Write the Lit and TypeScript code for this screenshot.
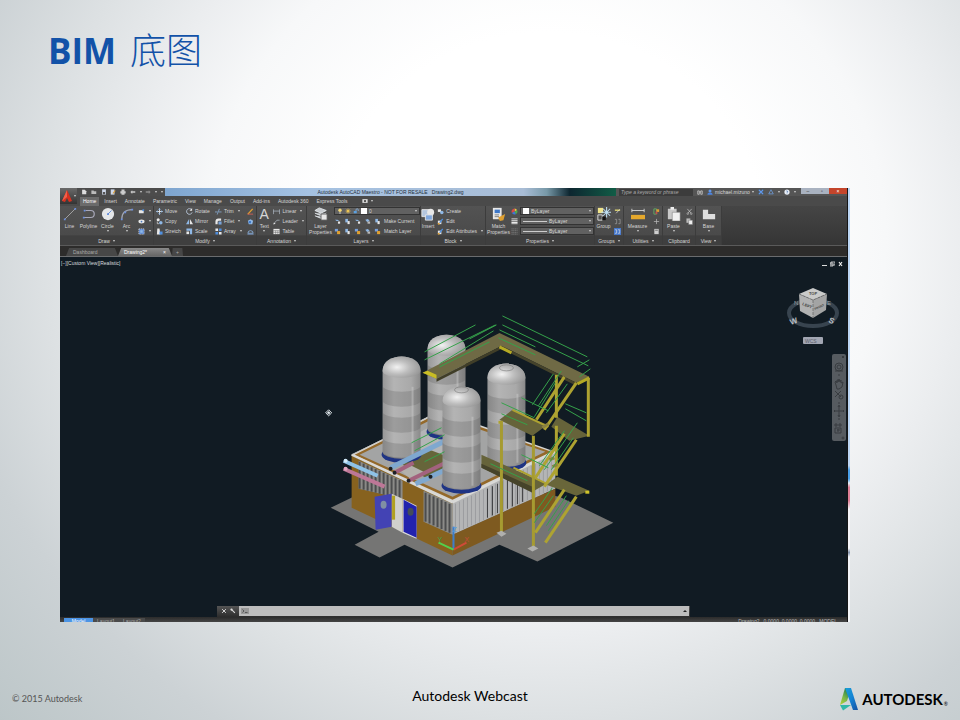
import { LitElement, html, svg, css, nothing, TemplateResult } from "lit";
import { customElement } from "lit/decorators.js";

const B = "#8fb8e6";
const W = "#e8e8e8";
const Y = "#e0a030";

/* Toolbar glyphs, each drawn in a 16 x 16 box */
const glyphs: Record<string, unknown> = {
  line: svg`<path d="M2 14L14 2" stroke="#aaa" stroke-width="1"/><path d="M1 13h2v2H1zM13 1h2v2h-2z" fill="#6b8fe0"/>`,
  polyline: svg`<path d="M4 4h6a4 4 0 0 1 0 8H2" fill="none" stroke="#a8a8b8" stroke-width="1.4"/><path d="M2 3h2v2H2zM1 11h2v2H1z" fill="#6b8fe0"/>`,
  circle: svg`<circle cx="8" cy="8" r="7" fill="#e4e6e8"/><path d="M8 8l4-4" stroke="#5a86d8"/><path d="M7 7h2v2H7z" fill="#5a86d8"/>`,
  arc: svg`<path d="M2 14C2 7 6 3 14 3" fill="none" stroke="#a0a6b4" stroke-width="1.3"/><path d="M1 13h2v2H1zM5 5h2v2H5zM13 2h2v2h-2z" fill="#6b8fe0"/>`,
  rect: svg`<path d="M2 5h11v7H2z" fill="${W}"/><path d="M10 3h4v4h-4z" fill="#4f8fe0"/>`,
  ellipse: svg`<ellipse cx="8" cy="8" rx="7" ry="4.5" fill="${W}"/><circle cx="8" cy="8" r="2" fill="#4a7ac0"/>`,
  hatch: svg`<path d="M2 2h12v12H2z" fill="#4f7fd0" stroke="${W}" stroke-width="1.5" stroke-dasharray="3 1.5"/><path d="M5 5h6v6H5z" fill="${B}"/>`,
  move: svg`<path d="M8 1v14M1 8h14" stroke="${W}" stroke-width="2"/><path d="M8 0l3 4H5zM8 16l3-4H5zM0 8l4-3v6zM16 8l-4-3v6z" fill="${B}"/>`,
  copy: svg`<circle cx="5" cy="4" r="3.5" fill="${W}"/><circle cx="11" cy="11" r="4" fill="${B}"/><path d="M3 8v5h4" fill="none" stroke="${W}" stroke-width="1.5"/>`,
  stretch: svg`<path d="M3 1h5l2 14H2z" fill="${W}"/><path d="M8 8h7v7H8z" fill="#4f8fe0"/>`,
  rotate: svg`<path d="M13 4a6.5 6.5 0 1 0 1 6" fill="none" stroke="#b9c8dc" stroke-width="2"/><path d="M14 0v6H8z" fill="${W}"/>`,
  mirror: svg`<path d="M7 2v12H0z" fill="${B}"/><path d="M9 2v12h7z" fill="${W}"/>`,
  scale: svg`<path d="M1 1h13v13H9V6H1z" fill="${B}"/><path d="M1 8h6v6H1z" fill="${W}"/>`,
  trim: svg`<path d="M0 9h6M9 9h6M10 2L5 15" stroke="${B}" stroke-width="1.6"/>`,
  fillet: svg`<path d="M1 14V8a7 7 0 0 1 7-7h6v5H9a3 3 0 0 0-3 3v5z" fill="${W}"/><path d="M8 8h7v7H8z" fill="#78a4dc"/>`,
  array: svg`<path d="M1 1h6v6H1zM9 9h6v6H9z" fill="${W}"/><path d="M9 1h6v6H9zM1 9h6v6H1z" fill="#4f8fe0"/>`,
  erase: svg`<path d="M2 14L13 2" stroke="${Y}" stroke-width="3"/><path d="M1 14h13" stroke="#d06058" stroke-width="2"/>`,
  explode: svg`<path d="M2 6l6-3 6 3-2 8H4z" fill="${B}"/><path d="M4 7h5v5H4z" fill="#3f78c8"/>`,
  offset: svg`<path d="M2 12a6 6 0 0 1 12 0z" fill="none" stroke="${B}" stroke-width="1.8"/><path d="M1 14h14" stroke="#7f9fd0" stroke-width="2"/>`,
  linear: svg`<path d="M1 3v11M15 3v11M1 7h14" stroke="#b9c3cf" stroke-width="1.5" fill="none"/>`,
  leader: svg`<path d="M2 13L9 5h6" stroke="#b9c3cf" stroke-width="1.5" fill="none"/><path d="M1 15l1-5 4 3z" fill="${W}"/>`,
  table: svg`<path d="M1 2h14v12H1z" fill="${W}"/><path d="M1 6h14M1 10h14M6 6v8M11 6v8" stroke="#555"/>`,
  layers: svg`<path d="M6 1l8 3-6 3-7-3zM1 7l7 3 6-3M1 10l7 3 4-2" fill="#c8ccd0" stroke="#e4e8ec"/><path d="M8 8h7v7H8z" fill="${W}" stroke="#555"/>`,
  layerA: svg`<path d="M2 4h6l4 3H6z" fill="${B}"/><path d="M9 8h5v5H9z" fill="${W}"/>`,
  layerB: svg`<path d="M3 2h6v8H3z" fill="${B}"/><path d="M8 7h5v7H8z" fill="${W}"/>`,
  layerC: svg`<path d="M2 2h7v6H2z" fill="#7aa0d8"/><path d="M7 7h7v7H7z" fill="${Y}"/>`,
  layerD: svg`<path d="M3 4l6-2 4 5-6 2z" fill="${B}"/><path d="M8 8h6v5H8z" fill="#b9b9b9"/>`,
  bulb: svg`<circle cx="8" cy="6" r="4.5" fill="#f2d774"/><path d="M6 11h4v4H6z" fill="#bbb"/>`,
  sun: svg`<circle cx="8" cy="8" r="4" fill="#f4cf5a"/><path d="M8 0v16M0 8h16M2 2l12 12M14 2L2 14" stroke="#e8bf50"/>`,
  lock: svg`<path d="M2 8h8v6H2z" fill="#5aa0e0"/><path d="M8 8V5a3 3 0 0 1 6 0v3" stroke="${B}" stroke-width="2" fill="none"/>`,
  insert: svg`<path d="M1 3h9v8H1z" fill="#b4c6de" stroke="${W}"/><circle cx="11" cy="6" r="4" fill="${W}"/><path d="M5 9h8v6H5z" fill="#7fa6dc" stroke="${W}"/>`,
  create: svg`<path d="M2 3h7v6H2z" fill="${W}"/><circle cx="11" cy="10" r="4" fill="${B}"/>`,
  edit: svg`<path d="M2 6h8v8H2z" fill="${W}"/><path d="M6 11l7-9" stroke="#4f8fe0" stroke-width="3"/><path d="M2 11h4v4H2z" fill="${Y}"/>`,
  match: svg`<path d="M1 1h10v13H1z" fill="${W}"/><path d="M3 3h6v4H3z" fill="#3f78c8"/><path d="M3 9h5M3 11h5" stroke="#777"/><path d="M7 12l8-4-2 7-4 1z" fill="${Y}"/>`,
  wheel: svg`<path d="M8 8V1a7 7 0 0 1 6 4z" fill="#e8c840"/><path d="M8 8l6-3a7 7 0 0 1-3 9z" fill="#50a850"/><path d="M8 8l3 6a7 7 0 0 1-9-3z" fill="#3f78d8"/><path d="M8 8l-6 3A7 7 0 0 1 8 1z" fill="#d84848"/>`,
  weights: svg`<path d="M1 2h14M1 6h14M1 13h14" stroke="${W}" stroke-width="2"/><path d="M1 10h14" stroke="${W}" stroke-width="3"/>`,
  linetypes: svg`<path d="M1 2h14M1 6h14M1 10h14M1 14h14" stroke="#888" stroke-width="1.5" stroke-dasharray="3 1"/>`,
  group: svg`<path d="M1 1h6v6H1z" fill="#efe38a"/><path d="M1 9h5v6H1z" fill="none" stroke="${W}"/><path d="M11 0v12M5 6h11M7 2l8 8M15 2L7 10" stroke="#bfe0f4" stroke-width="1.2"/><path d="M6 11h4v4H6z" fill="#111"/>`,
  ungroup: svg`<path d="M2 5h12" stroke="#e8dc70" stroke-width="3"/><path d="M5 12l8-9" stroke="${W}" stroke-width="1.5"/>`,
  groupEdit: svg`<path d="M2 3h4v10H2M10 3h4v10h-4" fill="none" stroke="#aaa" stroke-width="1.4"/>`,
  groupSel: svg`<path d="M0 0h16v16H0z" fill="#4678cc"/><path d="M2 4h4v8H2M9 4h4v8H9" fill="none" stroke="${W}" stroke-width="1.4"/>`,
  measure: svg`<path d="M1 4h14M1 2v4M15 2v4" stroke="#d8d8d8"/><path d="M0 9h16v5H0z" fill="#e5a82c"/>`,
  quick: svg`<path d="M2 2h6v12H2z" fill="none" stroke="#62b062" stroke-width="2"/><path d="M8 3h6v6H8z" fill="${Y}"/><path d="M6 8h4v6H6z" fill="#c05050"/>`,
  point: svg`<path d="M8 2v12M2 8h12" stroke="#bbb" stroke-width="1.6"/>`,
  calc: svg`<path d="M3 2h10v12H3z" fill="#cfcfcf"/><path d="M5 4h6v2H5z" fill="#666"/>`,
  paste: svg`<path d="M1 2h10v12H1z" fill="#c9c9c9"/><path d="M4 0h4v3H4z" fill="#eee"/><path d="M6 6h9v10H6z" fill="#f1f1f1" stroke="#777" stroke-width=".6"/>`,
  cut: svg`<path d="M3 2l9 10M13 2L4 12" stroke="#ddd" stroke-width="1.4"/><circle cx="4" cy="13" r="2" fill="none" stroke="#ddd"/><circle cx="12" cy="13" r="2" fill="none" stroke="#ddd"/>`,
  clip: svg`<path d="M1 1h9v10H1z" fill="#bbb"/><path d="M6 5h9v10H6z" fill="#eee" stroke="#666"/>`,
  base: svg`<path d="M1 3h6v5h8v6H1z" fill="#dedede"/>`,
  doc: svg`<path d="M3 2h7l4 4v8H3z" fill="#ddd"/>`,
  open: svg`<path d="M1 4h6l1 2h6v7H1z" fill="#bbb"/>`,
  save: svg`<path d="M3 1h10v14H3z" fill="#cfd8ea"/><path d="M5 8h6v6H5z" fill="#555"/>`,
  saveAs: svg`<path d="M2 1h10v14H2z" fill="#cfd8ea"/><path d="M8 12l6-8" stroke="${Y}" stroke-width="3"/>`,
  print: svg`<path d="M4 1h8v5H4zM1 6h14v6H1zM4 10h8v5H4z" fill="#ccc"/>`,
  undo: svg`<path d="M6 3L1 8l5 5v-3h8V6H6z" fill="#c9c9c9"/>`,
  redo: svg`<path d="M10 3l5 5-5 5v-3H2V6h8z" fill="#8b8b8b"/>`,
  find: svg`<path d="M2 5h4v9H2zM10 5h4v9h-4zM6 8h4" fill="none" stroke="#ccc" stroke-width="2"/>`,
  user: svg`<circle cx="8" cy="5" r="4" fill="#5f98ec"/><path d="M1 15c0-8 14-8 14 0z" fill="#4c84e0"/>`,
  exchange: svg`<path d="M2 2l12 12M14 2L2 14" stroke="#5f98ec" stroke-width="3"/><path d="M1 1h14v14H1z" fill="none" stroke="#456"/>`,
  cloud: svg`<path d="M8 2l6 11H2z" fill="none" stroke="#6f9fe0" stroke-width="2"/>`,
  help: svg`<circle cx="8" cy="8" r="7" fill="#e8eef6"/><path d="M6 6a2 2 0 1 1 2 3v1M8 12v1" stroke="#335f9f" stroke-width="1.6" fill="none"/>`,
  camera: svg`<path d="M1 3h14v10H1z" fill="#ddd"/><circle cx="8" cy="8" r="3" fill="#444"/>`,
  wrench: svg`<path d="M3 3l10 10" stroke="#ddd" stroke-width="3"/><circle cx="4" cy="4" r="3" fill="#ddd"/>`,
  prompt: svg`<path d="M0 2h16v12H0z" fill="#999"/><path d="M3 5l3 3-3 3M8 11h5" stroke="#444" fill="none" stroke-width="1.5"/>`,
};

const icon = (name: string, size = "s") =>
  html`<svg class="ico ${size}" viewBox="0 0 16 16" aria-hidden="true">${glyphs[name]}</svg>`;
const caret = html`<i class="caret"></i>`;

const big = (name: string, label: string, second: unknown = nothing) => html`
  <button class="big">
    <span class="bigicon">${name === "A" ? html`<span class="letter">A</span>` : icon(name, "l")}</span>
    <span>${label}</span>${second}
  </button>`;

const small = (name: string, label: string, drop = false) =>
  html`<button class="small">${icon(name)}${label ? html`<span>${label}</span>` : nothing}${drop ? caret : nothing}</button>`;

const col = (...rows: TemplateResult[]) => html`<div class="col">${rows}</div>`;

const line = (rows: number[][], stroke: string, width: number) =>
  rows.map((r) => svg`<line x1=${r[0]} y1=${r[1]} x2=${r[2]} y2=${r[3]} stroke=${stroke} stroke-width=${width} />`);

const poly = (points: string, fill: string) => svg`<polygon points=${points} fill=${fill} />`;

/* A storage tank: left edge, dome top and base height */
const tank = (x: number, top: number, base: number) => {
  const bands: number[] = [];
  for (let y = top + 29; y < base - 6; y += 26) bands.push(y);
  const h = (y: number) => Math.min(15, base - 2 - y);
  return svg`
    <ellipse cx=${x + 19} cy=${base} rx="20" ry="8" fill="#1f3484" />
    <ellipse cx=${x + 19} cy=${base - 3} rx="19" ry="7" fill="#8c8c8c" />
    <path d="M${x} ${top + 14}C${x} ${top - 5} ${x + 38} ${top - 5} ${x + 38} ${top + 14}V${base - 4}A19 7 0 0 1 ${x} ${base - 4}Z" fill="url(#steel)" />
    ${bands.map((y) => svg`<path d="M${x} ${y}A19 6 0 0 0 ${x + 38} ${y}V${y + h(y)}A19 6 0 0 1 ${x} ${y + h(y)}Z" fill="#555" opacity=".24" />`)}
    <path d="M${x + 30} ${top + 30}V${base}" stroke="#d4d4d4" stroke-width="2" opacity=".4" />
    <path d="M${x} ${top + 14}C${x} ${top - 5} ${x + 38} ${top - 5} ${x + 38} ${top + 14}A19 7 0 0 1 ${x} ${top + 14}Z" fill="url(#dome)" />`;
};

const ribs = (x0: number, x1: number, top: (x: number) => number, bottom: (x: number) => number, step: number, stroke: string, w: number) => {
  const out: number[][] = [];
  for (let x = x0; x <= x1; x += step) out.push([x, top(x), x, bottom(x)]);
  return line(out, stroke, w);
};

const scene = svg`
  <defs>
    <linearGradient id="steel"><stop offset="0" stop-color="#979797"/><stop offset=".3" stop-color="#b4b4b4"/><stop offset=".75" stop-color="#a9a9a9"/><stop offset="1" stop-color="#8a8a8a"/></linearGradient>
    <radialGradient id="dome" cx=".38" cy=".5" r=".65"><stop offset="0" stop-color="#f2f2f2"/><stop offset=".5" stop-color="#bdbdbd"/><stop offset="1" stop-color="#969696"/></radialGradient>
  </defs>
  ${poly("331,508 379,532 355,545 380,558 405,545 453,568 500,545 538,562 614,523 560,497 460,480 360,494", "#757574")}
  ${poly("352,456 453,503 453,556 352,508", "#87621f")}
  ${poly("359,461 403,481 403,499 359,489", "#8b8b88")}
  ${ribs(360, 402, (x) => 462 + (x - 360) * 0.46, (x) => 489 + (x - 360) * 0.25, 4, "#4c4d4e", 2)}
  ${poly("424,491 453,504 453,535 424,522", "#8b8b88")}
  ${ribs(426, 452, (x) => 493 + (x - 426) * 0.46, (x) => 522 + (x - 426) * 0.46, 4, "#4c4d4e", 2)}
  ${poly("453,503 556,452 556,489 453,535", "#b4b5b6")}
  ${ribs(456, 554, (x) => 504 - (x - 456) * 0.5, (x) => 533 - (x - 456) * 0.45, 4, "#9c9da0", 1)}
  ${ribs(488, 524, (x) => 489 - (x - 488) * 0.5, (x) => 518 - (x - 488) * 0.45, 5, "#3c3c3e", 1)}
  ${poly("453,535 556,489 556,507 453,556", "#7e5a20")}
  ${poly("352,455 440,411 556,452 453,503", "#d6d6d4")}
  ${poly("355,455 440,413 552,452 453,500", "#94692a")}
  ${poly("360,455 440,416 546,452 453,497", "#a3a4a4")}
  ${poly("384,452 436,424 480,440 430,468", "#b4b5b6")}
  ${line([[352, 455, 453, 503], [453, 503, 556, 452]], "#d9d9d7", 2)}
  ${line([[440, 412, 352, 455]], "#c8c8c4", 1)}
  ${poly("403,465 430,450 462,462 428,479", "#66653a")}
  ${poly("400,470 412,466 424,472 412,480", "#b3b1ac")}
  ${tank(428, 335, 432)}
  ${tank(383, 357, 455)}
  ${line([[391, 468, 446, 441]], "#7fa8cf", 5)}
  ${line([[395, 473, 414, 463], [409, 481, 446, 463]], "#a3627e", 4)}
  ${line([[431, 477, 446, 470], [416, 484, 430, 478]], "#7fa8cf", 5)}
  <g fill="#1d2024"><circle cx="391" cy="469" r="2"/><circle cx="395" cy="473" r="2"/><circle cx="409" cy="481" r="2"/><circle cx="431" cy="477" r="2"/></g>
  ${tank(488, 364, 463)}
  ${tank(443, 387, 486)}
  <g fill="none" stroke="#777" stroke-width=".6"><ellipse cx="462" cy="390" rx="7" ry="3"/><ellipse cx="507" cy="368" rx="7" ry="3"/></g>
  ${line([[344, 461, 378, 476]], "#8ec2e6", 4)}
  ${line([[344, 469, 385, 487]], "#bd7797", 4)}
  <circle cx="346" cy="461" r="2" fill="#d3eaf8"/><circle cx="346" cy="469" r="2" fill="#e0a8c0"/>
  ${poly("392,494 403,499 403,533 392,527", "#d0d0cc")}
  ${line([[394, 496, 394, 520]], "#b0a020", 3)}
  ${poly("403,499 417,506 417,539 403,533", "#dcdcdc")}
  ${poly("375,497 392,494 392,527 376,530", "#4343b4")}
  ${poly("404,500 417,507 417,538 404,532", "#2222ad")}
  <ellipse cx="384" cy="505" rx="3" ry="4" fill="#8090a4"/><ellipse cx="411" cy="512" rx="3" ry="4" fill="#444d58"/>

  ${poly("482,455 547,484 533,492 482,468", "#66633a")}
  ${poly("482,464 533,487 533,493 482,468", "#46432a")}
  ${poly("547,485 558,477 590,491 577,496", "#69663a")}
  ${poly("423,373 500,333 590,377 577,383 502,346 437,379", "#6f6a45")}
  ${poly("437,379 502,346 502,349 437,382", "#403e28")}
  ${poly("502,346 577,383 577,386 502,349", "#45432b")}
  ${poly("423,373 437,379 437,375 428,371", "#c9bd24")}
  ${line([[500, 347, 512, 353], [578, 384, 590, 378]], "#b5aa24", 3)}
  ${poly("500,420 513,410 548,425 533,436", "#66633a")}
  ${poly("552,427 558,417 590,436 570,441", "#66633a")}
  ${line([[513, 410, 549, 427], [514, 468, 547, 484], [500, 421, 500, 424]], "#aea331", 2)}
  ${line([[589, 378, 589, 437], [557, 375, 557, 418], [557, 426, 557, 476]], "#aea331", 3)}
  ${line([[502, 421, 502, 533], [534, 436, 534, 549]], "#a69b31", 3)}
  ${line([[565, 377, 537, 420], [577, 383, 545, 430], [577, 440, 545, 487], [565, 434, 536, 478], [565, 490, 536, 533], [577, 497, 546, 543]], "#aea331", 3)}
  ${line([[588, 491, 588, 494]], "#d0c42a", 4)}
  ${line([[543, 428, 549, 424], [553, 467, 558, 465], [550, 460, 555, 458]], "#8b8340", 3)}
  ${poly("497,533 502,531 507,534 502,537", "#b0b0ae")}
  ${poly("528,549 534,546 539,549 533,552", "#b0b0ae")}
  ${line([
    [503, 316, 588, 357], [503, 325, 589, 366], [497, 325, 470, 339], [500, 330, 536, 347], [425, 352, 476, 325], [425, 360, 496, 325], [440, 364, 494, 331],
    [440, 367, 490, 342], [499, 338, 536, 355], [578, 367, 590, 360], [580, 377, 591, 369], [554, 374, 533, 405], [562, 371, 539, 406], [568, 384, 547, 413],
    [535, 417, 556, 383], [566, 404, 587, 413], [566, 409, 587, 421], [502, 403, 535, 418], [502, 414, 528, 425], [522, 398, 549, 411], [578, 423, 545, 470],
    [565, 431, 540, 466], [574, 438, 552, 470], [491, 464, 528, 481], [522, 455, 549, 468], [553, 488, 535, 514], [554, 496, 535, 523], [567, 496, 547, 526], [569, 501, 549, 531],
    [412, 443, 442, 428], [415, 451, 445, 435], [425, 462, 445, 452],
  ], "#35a24a", 1)}
  ${line([[454, 527, 454, 550]], "#3f7ec8", 2)}
  ${line([[454, 550, 467, 543]], "#d04a38", 2)}
  ${line([[454, 550, 439, 543]], "#52d04c", 2)}
  <text x="453" y="532" font-size="7" fill="#4f9be0">Z</text>
  <text x="465" y="542" font-size="7" fill="#c44c3a">X</text>
  <text x="438" y="542" font-size="7" fill="#3ea648">Y</text>
  <g transform="translate(329 413)" stroke="#dfe6ea" fill="none"><path d="M-3 0L0 -3L3 0L0 3Z"/><circle r="1" fill="#dfe6ea"/></g>`;

@customElement("drawing-viewport")
export class DrawingViewport extends LitElement {
  static styles = css`
    :host { display: block; position: relative; background: #111b23; color: #d8dcdf; font: 5px/6px "Liberation Sans", sans-serif; }
    .scene { display: block; width: 100%; }
    .label { position: absolute; left: 1px; top: 3px; }
    .win { position: absolute; right: 4px; top: 4px; display: flex; gap: 3px; }
    button { font: inherit; color: inherit; border: 0; padding: 0; background: none; }
    .win button { width: 5px; height: 6px; display: block; }
    .win svg { display: block; width: 5px; height: 6px; }
    .cube { position: absolute; right: 5px; top: 27px; width: 58px; }
    .wcs { position: absolute; right: 24px; top: 80px; width: 20px; height: 7px; border-radius: 1px; background: #a2a6b2; color: #5c606b; text-align: left; padding-left: 2px; }
    .nav { position: absolute; right: 1px; top: 97px; width: 14px; height: 87px; border-radius: 2px; background: #565b60; }
    .nav svg { display: block; }
    .cmd { position: absolute; left: 20%; right: 20%; bottom: 0; height: 11px; display: flex; background: linear-gradient(#555, #2c2c2c); }
    .tools { width: 22px; display: flex; align-items: center; justify-content: space-evenly; }
    .ico { width: 6px; height: 6px; display: block; }
    .entry { flex: 1; display: flex; align-items: center; gap: 2px; margin: 0 1px 1px 0; padding: 0 2px; background: #bdbdbd; }
    .entry .ico { width: 8px; height: 8px; }
    input { flex: 1; min-width: 0; border: 0; padding: 0; background: none; font: inherit; height: 8px; outline: 0; }
    .tri { width: 0; border: 2px solid transparent; border-top-width: 0; border-bottom: 2px solid #222; }
  `;
  render() {
    return html`
      <svg class="scene" viewBox="60 257 788 360" role="img" aria-label="Tank building model">${scene}</svg>
      <span class="label">[−][Custom View][Realistic]</span>
      <div class="win">
        <button aria-label="Minimize"><svg viewBox="0 0 5 6"><path d="M0 4h5v1H0z" fill="#ddd" /></svg></button>
        <button aria-label="Restore"><svg viewBox="0 0 5 6"><path d="M1 1h4v3H1zM0 2h3v3H0z" fill="none" stroke="#ddd" stroke-width=".8" /></svg></button>
        <button aria-label="Close"><svg viewBox="0 0 5 6"><path d="M1 1l3 4M4 1L1 5" stroke="#eee" stroke-width="1.2" /></svg></button>
      </div>
      <svg class="cube" viewBox="784 283 58 48" role="img" aria-label="View cube">
        <ellipse cx="813" cy="312" rx="24" ry="13" fill="none" stroke="#38444f" stroke-width="4" />
        <g font-size="8" font-weight="bold" fill="#b9bec2"><text transform="translate(791 324) rotate(-20)">W</text><text transform="translate(828 321) rotate(25)">S</text></g>
        <g font-size="6" fill="#9aa0a4"><text x="794" y="304">N</text><text x="827" y="304">E</text></g>
        <polygon points="799,293 813,287 827,293 813,299" fill="#c9cac9" />
        <polygon points="799,293 813,299 813,317 800,310" fill="#b1b2b2" />
        <polygon points="813,299 827,293 826,309 813,317" fill="#a3a4a4" />
        <path d="M799 293L813 299L827 293M813 299V317" stroke="#555" stroke-width=".6" stroke-dasharray="3 1" fill="none" />
        <g font-size="4" font-weight="bold" fill="#444"><text x="809" y="294">TOP</text><text transform="translate(802 304) rotate(22)">LEFT</text><text transform="translate(815 309) rotate(-24)" font-size="3">FRONT</text></g>
      </svg>
      <button class="wcs">WCS</button>
      <div class="nav"><svg viewBox="0 0 14 87" fill="none" stroke="#383c40">
        <path d="M10 2l2 2M12 2l-2 2" /><circle cx="7" cy="13" r="4" /><circle cx="7" cy="13" r="2" /><path d="M3 17h8M6 21h2M6 49h2M6 65h2" />
        <path d="M4 31l-1-3 1-1 1 2v-3h1v2l1-3 1 3 1-2v3l2-1-1 5-3 2H5z" /><path d="M3 37l6 6M9 37l-6 6" /><circle cx="9" cy="43" r="2" />
        <path d="M7 52v10M2 57h10M6 53l1-2 1 2M6 61l1 2 1-2M3 56l-1 1 1 1M11 56l1 1-1 1" /><path d="M3 70h2v2H3zM7 70h2v2H7zM3 74h6v5H3zM6 75v3M5 76h3" /><circle cx="11" cy="84" r="1" />
      </svg></div>
      <div class="cmd">
        <div class="tools">
          <svg class="ico" viewBox="0 0 16 16"><path d="M3 3l10 10M13 3L3 13" stroke="#ddd" stroke-width="2.5" /></svg>
          ${icon("wrench")}
        </div>
        <label class="entry">${icon("prompt")}<input aria-label="Command line" /><i class="tri"></i></label>
      </div>`;
  }
}

@customElement("cad-window")
export class CadWindow extends LitElement {
  static styles = css`
    :host { display: block; overflow: hidden; background: #2d2c2b; color: #d6d6d6; font: 5px/6px "Liberation Sans", sans-serif; border-right: 1px solid #161616; white-space: nowrap; }
    button, select, input { font: inherit; color: inherit; border: 0; padding: 0; margin: 0; background: none; }
    .ico { display: block; flex: none; }
    .s { width: 7px; height: 7px; }
    .l { width: 14px; height: 14px; }
    .q { width: 6px; height: 6px; }
    .caret { display: block; flex: none; width: 0; border: 1px solid transparent; border-top: 2px solid #d0d0d0; border-bottom: 0; }
    .top { display: grid; grid-template-columns: 17px 1fr; grid-template-rows: 8px 10px; background: #4a4a4a; }
    .app { grid-row: 1 / 3; background: linear-gradient(#6a6a6a, #333); height: 16px; display: flex; align-items: center; gap: 1px; padding-left: 1px; }
    .app svg { width: 12px; height: 14px; }
    .title { display: grid; grid-template-columns: 88px 1fr 231px; background: linear-gradient(90deg, #7fa6d0 0 12%, #a5c2e2 30%, #a9bdd6 58%, #7899a8 61%, #0d2630 64%, #12664a 71%, #555 74%); }
    .qat { display: flex; align-items: center; justify-content: space-between; padding: 0 2px 0 4px; background: #4c4c4c; }
    .name { text-align: center; color: #26303c; line-height: 8px; }
    .help { display: flex; align-items: center; gap: 4px; background: #555; padding-left: 3px; }
    .search { display: block; width: 74px; height: 7px; background: #3c3c3c; font-style: italic; padding-left: 2px; box-sizing: border-box; }
    .search::placeholder { color: #aaa; opacity: 1; }
    .acct { display: flex; align-items: center; gap: 2px; }
    .sys { margin-left: auto; display: flex; height: 6px; align-self: start; }
    .sys button { width: 14px; background: #a9b2c0; color: #333; line-height: 5px; }
    .sys .close { width: 18px; background: #c4452b; color: #fff; }
    .tabs { display: flex; align-items: center; padding-left: 3px; gap: 2px; }
    .tabs button { padding: 0 3px; height: 9px; }
    .tabs .on { background: #6b6b6b; color: #fff; }
    .tabs .cam { display: flex; align-items: center; gap: 3px; margin-left: 6px; }
    .ribbon { display: grid; grid-template-columns: 94px 103px 50px 114px 65px 109px 29px 39px 33px 26px 1fr; height: 40px; background: linear-gradient(#454545, #353535); border-bottom: 1px solid #5a5a5a; box-sizing: border-box; }
    .panel { display: flex; flex-direction: column; background: linear-gradient(#535353, #4a4a4a 75%, #3f3f3f 76%); border-right: 1px solid #3c3c3c; min-width: 0; }
    .body { display: flex; height: 30px; }
    .ptitle { height: 9px; display: flex; align-items: center; justify-content: center; gap: 3px; }
    .big { flex: 1; min-width: 0; display: flex; flex-direction: column; align-items: center; overflow: visible; }
    .bigicon { height: 16px; margin-bottom: 1px; display: flex; align-items: center; }
    .big .caret { margin-top: 1px; }
    .letter { font-size: 14px; line-height: 16px; }
    .col { flex: none; display: grid; grid-template-rows: repeat(3, 10px); padding: 0 1px; }
    .small { display: flex; align-items: center; gap: 2px; padding: 0 1px; }
    .small .caret { margin-left: 2px; }
    .modify { justify-content: space-between; }
    .wide { flex: none; width: 86px; }
    .row { display: flex; align-items: center; height: 10px; gap: 2px; }
    .tight { gap: 3px; }
    .combo { display: flex; align-items: center; gap: 2px; height: 8px; border: 1px solid #333; background: #616161; padding: 0 2px; flex: 1; box-sizing: border-box; }
    .combo select { appearance: none; flex: 1; min-width: 0; height: 6px; line-height: 6px; outline: 0; }
    .swatch { width: 6px; height: 6px; background: #fff; flex: none; }
    .stroke { width: 24px; height: 1px; background: #ccc; flex: none; }
    .combos { flex: none; width: 83px; }
    .docs { display: flex; align-items: end; height: 11px; border-bottom: 1px solid #6a6c6e; box-sizing: border-box; padding-left: 6px; }
    .docs button { height: 8px; text-align: left; background: #474747; color: #aaa; width: 52px; padding: 0 7px; clip-path: polygon(6% 0, 94% 0, 100% 100%, 0 100%); }
    .docs .on { background: linear-gradient(#8a8a8a, #666); color: #fff; display: flex; justify-content: space-between; align-items: center; width: 54px; padding: 0 6px; }
    .docs .plus { width: 11px; padding: 0 4px; }
    .foot { display: flex; height: 5px; overflow: hidden; align-items: start; background: linear-gradient(#2b2b2b, #454545); padding: 0 10px 0 4px; }
    .foot button { height: 6px; line-height: 6px; color: #aaa; background: #4a4a4a; width: 26px; margin-top: 1px; }
    .foot .on { background: #4c94e4; color: #fff; width: 29px; }
    .status { margin-left: auto; line-height: 6px; color: #bbb; margin-top: 1px; }
  `;

  private panel(title: string, body: unknown, drop = true, cls = "") {
    return html`<section class="panel"><div class="body ${cls}">${body}</div><div class="ptitle">${title}${drop ? caret : nothing}</div></section>`;
  }

  private combo(name: string, value: string, before: unknown) {
    return html`<label class="combo">${before}<select aria-label=${name}><option>${value}</option></select>${caret}</label>`;
  }

  render() {
    const tabs = ["Home", "Insert", "Annotate", "Parametric", "View", "Manage", "Output", "Add-ins", "Autodesk 360", "Express Tools"];
    const layerRow = (names: string[], label: string) =>
      html`<div class="row tight">${names.map((n) => icon(n))}<span>${label}</span></div>`;
    return html`
      <header class="top">
        <button class="app" aria-label="Application menu">
          <svg viewBox="0 0 12 14"><path d="M6 1L1 12l3 1 2-4 2 4 3-1z" fill="#d8301f" /><path d="M6 1L1 12l5-4z" fill="#f0604a" /></svg>${caret}
        </button>
        <div class="title">
          <div class="qat">${["doc", "open", "save", "saveAs", "print", "undo"].map((n) => icon(n, "q"))}${caret}${icon("redo", "q")}${caret}${caret}</div>
          <div class="name">Autodesk AutoCAD Maestro - NOT FOR RESALE &nbsp; Drawing2.dwg</div>
          <div class="help">
            <input class="search" aria-label="Search" placeholder="Type a keyword or phrase" />
            ${icon("find", "q")}
            <span class="acct">${icon("user", "q")}michael.mizuno${caret}</span>
            ${icon("exchange", "q")}${icon("cloud", "q")}${caret}${icon("help", "q")}${caret}
            <div class="sys"><button aria-label="Minimize">–</button><button aria-label="Restore">▫</button><button class="close" aria-label="Close">×</button></div>
          </div>
        </div>
        <nav class="tabs">
          ${tabs.map((t, i) => html`<button class=${i ? "" : "on"}>${t}</button>`)}
          <button class="cam" aria-label="Ribbon options">${icon("camera", "q")}${caret}</button>
        </nav>
      </header>
      <div class="ribbon">
        ${this.panel("Draw", html`${big("line", "Line")}${big("polyline", "Polyline")}${big("circle", "Circle", caret)}${big("arc", "Arc", caret)}
          ${col(small("rect", "", true), small("ellipse", "", true), small("hatch", "", true))}`)}
        ${this.panel("Modify", html`${col(small("move", "Move"), small("copy", "Copy"), small("stretch", "Stretch"))}
          ${col(small("rotate", "Rotate"), small("mirror", "Mirror"), small("scale", "Scale"))}
          ${col(small("trim", "Trim", true), small("fillet", "Fillet", true), small("array", "Array", true))}
          ${col(small("erase", ""), small("explode", ""), small("offset", ""))}`, true, "modify")}
        ${this.panel("Annotation", html`${big("A", "Text", caret)}
          ${col(small("linear", "Linear", true), small("leader", "Leader", true), small("table", "Table"))}`)}
        ${this.panel("Layers", html`${big("layers", "Layer", html`<span>Properties</span>`)}
          <div class="wide"><div class="row">${this.combo("Layer", "0", html`${icon("bulb", "q")}${icon("sun", "q")}${icon("lock", "q")}<i class="swatch"></i>`)}</div>
            ${layerRow(["layerA", "layerB", "layerA", "layerD", "layerB"], "Make Current")}
            ${layerRow(["layerC", "layerB", "layerC", "layerD", "layerC"], "Match Layer")}</div>`)}
        ${this.panel("Block", html`${big("insert", "Insert")}${col(small("create", "Create"), small("edit", "Edit"), small("edit", "Edit Attributes", true))}`)}
        ${this.panel("Properties", html`${big("match", "Match", html`<span>Properties</span>`)}
          <div class="combos">
            <div class="row">${icon("wheel")}${this.combo("Color", "ByLayer", html`<i class="swatch"></i>`)}</div>
            <div class="row">${icon("weights")}${this.combo("Line weight", "ByLayer", html`<i class="stroke"></i>`)}</div>
            <div class="row">${icon("linetypes")}${this.combo("Line type", "ByLayer", html`<i class="stroke"></i>`)}</div>
          </div>`)}
        ${this.panel("Groups", html`${big("group", "Group")}${col(small("ungroup", ""), small("groupEdit", ""), small("groupSel", ""))}`)}
        ${this.panel("Utilities", html`${big("measure", "Measure", caret)}${col(small("quick", ""), small("point", ""), small("calc", ""))}`)}
        ${this.panel("Clipboard", html`${big("paste", "Paste", caret)}${col(small("cut", ""), small("clip", ""))}`, false)}
        ${this.panel("View", big("base", "Base", caret))}
      </div>
      <nav class="docs"><button>Dashboard</button><button class="on"><span>Drawing2*</span><span>×</span></button><button class="plus" aria-label="New drawing">+</button></nav>
      <drawing-viewport></drawing-viewport>
      <div class="foot"><button class="on">Model</button><button>Layout1</button><button>Layout2</button><span class="status">Drawing2 &nbsp; 0.0000, 0.0000, 0.0000 &nbsp; MODEL</span></div>`;
  }
}

@customElement("app-root")
export class AppRoot extends LitElement {
  static styles = css`
    :host { display: flex; flex-direction: column; min-height: 100vh; box-sizing: border-box; font-family: "Open Sans", "Noto Sans CJK SC", sans-serif;
      background: radial-gradient(75% 95% at 57% 33%, #fff 30%, #f7f8f9 47%, #ebedef 58%, #dde1e3 70%, #ccd2d5 84%, #bcc6c8 104%); }
    h1 { margin: 0; padding: 24px 48px 0; font-size: 35px; line-height: 54px; font-weight: 700; color: #1252a8; display: flex; align-items: center; gap: 14px; height: 54px; }
    .cjk { font-family: "Noto Sans CJK SC", sans-serif; font-weight: 300; font-size: 36px; padding-bottom: 6px; }
    .shot { margin: 110px 110px 0 60px; display: flex; }
    cad-window { flex: 1; min-width: 0; }
    .edge { flex: none; width: 2px; background: linear-gradient(#bcd6f4 0 64%, #4aa0e8 65% 67%, #e8f0f8 68%, #e08098 69% 72%, #f6f6fa 74% 83%, #8898b0 84%, #f4f6fa 85%); }
    footer { margin-top: auto; display: grid; grid-template-columns: 1fr auto 1fr; align-items: center; padding: 0 12px 6px 12px; height: 30px; }
    .copy { font: 9px/12px "Lato", sans-serif; color: #555; }
    .cast { font: 14px/20px "Lato", sans-serif; color: #000; margin: 0 20px 6px 0; }
    .brand { justify-self: end; display: flex; align-items: center; gap: 3px; color: #000; text-decoration: none; }
    .brand svg { width: 20px; height: 24px; }
    .word { font: 700 15px/24px "Lato", sans-serif; }
    .reg { font: 5px/6px "Lato", sans-serif; align-self: end; padding-bottom: 4px; margin-left: -2px; }
  `;
  render() {
    return html`
      <h1><span>BIM</span><span class="cjk">底图</span></h1>
      <main class="shot"><cad-window></cad-window><div class="edge"></div></main>
      <footer>
        <span class="copy">© 2015 Autodesk</span>
        <span class="cast">Autodesk Webcast</span>
        <a class="brand" href="#" aria-label="Autodesk">
          <svg viewBox="0 0 20 24">
            <defs>
              <linearGradient id="g" x1="0" y1="1" x2=".6" y2="0"><stop offset="0" stop-color="#b4d335" /><stop offset=".5" stop-color="#7ab648" /><stop offset="1" stop-color="#1f7a4c" /></linearGradient>
              <linearGradient id="b" x1="0" y1="0" x2="1" y2="1"><stop offset="0" stop-color="#18a0d8" /><stop offset=".5" stop-color="#1482d4" /><stop offset="1" stop-color="#1650a0" /></linearGradient>
            </defs>
            <path d="M6 1h6L8 14l-7 4z" fill="url(#g)" /><path d="M1 18h11l-8 5.500z" fill="#30b8a8" /><path d="M6 1h6l7 22h-5z" fill="url(#b)" />
          </svg>
          <span class="word">AUTODESK</span><span class="reg">®</span>
        </a>
      </footer>`;
  }
}
